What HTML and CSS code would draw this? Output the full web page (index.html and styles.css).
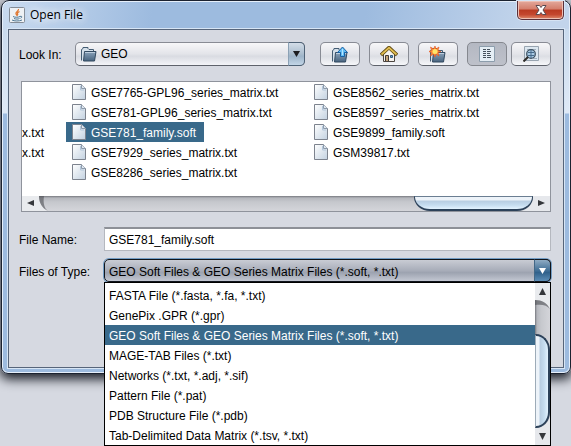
FILE: index.html
```html
<!DOCTYPE html>
<html lang="en">
<head>
<meta charset="utf-8">
<title>Open File</title>
<link rel="stylesheet" href="styles.css">
</head>
<body>
<svg class="defs" aria-hidden="true">
  <defs>
    <linearGradient id="folder" x2="0" y2="1"><stop stop-color="#8ba3bb"/><stop offset="1" stop-color="#48647f"/></linearGradient>
    <linearGradient id="page" x2="1" y2="1"><stop stop-color="#fff"/><stop offset="1" stop-color="#c3d2e1"/></linearGradient>
  </defs>
  <symbol id="doc" viewBox="0 0 14 16">
    <path d="M.5.5h9l4 4v11H.5z" fill="url(#page)" stroke="#7d838e"/>
    <path d="M9.5.5v4h4" fill="#dfe8f1" stroke="#8d9bab"/><path d="M8.500 2v4H12" fill="none" stroke="#b4c7db"/>
  </symbol>
  <symbol id="dir" viewBox="0 0 17 16">
    <path d="M1.500 14.500V3.500L3 2.500V1.500h5v1l1 1h4.500v3" fill="#d5e0ea" stroke="#445c73"/>
    <path d="M4.500 5.500h11.500l-1.500 9.500H3.500z" fill="url(#folder)" stroke="#334a61"/>
    <path d="M5 6.500h10" stroke="#bccddd"/>
  </symbol>
</svg>
<main class="window">
  <header class="titlebar">
    <svg class="java" width="16" height="16" viewBox="0 0 16 16" aria-hidden="true">
      <rect x=".5" y=".5" width="15" height="15" rx="1" fill="#eef1f4" stroke="#848c96"/>
      <path d="M9.500 2C10 4 6 5 7 7l1.500 2M10.500 4.500C8 6 8 6.500 9 8" fill="none" stroke="#e07832" stroke-width="1.300"/>
      <path d="M4 9.500c2 1 5 1 7 0M11 9.500c2-1 2.500 1 .5 1.800M5 11.500c2 .8 4 .8 5.500 0M3 13c2 1.300 7.500 1.300 10 0" fill="none" stroke="#4e7896"/>
    </svg>
    <h1>Open File</h1>
    <button class="close" aria-label="Close">
      <svg width="12" height="10" viewBox="0 0 12 10"><path d="M1 .5h3.500L6 2.500 7.500.5H11L8 5l3 4.500H7.500L6 7.500l-1.500 2H1L4 5z" fill="#fff" stroke="#5b4a50"/></svg>
    </button>
  </header>
  <form class="content">
    <div class="toolbar">
      <label for="lookin">Look In:</label>
      <div class="combo">
        <svg class="combo-icon" width="17" height="16" aria-hidden="true"><use href="#dir"/></svg>
        <select id="lookin" class="lookin"><option>GEO</option></select>
        <span class="arrow"><svg width="7" height="6" viewBox="0 0 7 6"><path d="M0 0h7L3.500 6z" fill="#1c1d20"/></svg></span>
      </div>
      <div class="tools">
        <button type="button" class="tool" aria-label="Up one level">
          <svg width="18" height="17" viewBox="0 0 18 17"><use href="#dir" width="17" height="16" y="1"/><path d="M11.500 1l5 5.500h-3v4h-4v-4h-3z" fill="#62bdf5" stroke="#1961a2"/><path d="M11.500 3v6" stroke="#b5e5ff"/></svg>
        </button>
        <button type="button" class="tool" aria-label="Home">
          <svg width="18" height="17" viewBox="0 0 18 17"><path d="M3.500 8L9 3l5.500 5v7.500h-11z" fill="#f5f3ef" stroke="#4c4540"/><path d="M1 9l8-7.500L17 9" fill="none" stroke="#5e4812" stroke-width="3.500"/><path d="M1.500 8.500L9 1.800l7.500 6.700" fill="none" stroke="#e0bd50" stroke-width="1.800"/><path d="M5.500 15V9.500h3V15" fill="#c6a57b" stroke="#443b33"/><path d="M10.500 9.500h2v2h-2z" fill="#65a3d0" stroke="#31597d"/></svg>
        </button>
        <button type="button" class="tool" aria-label="New folder">
          <svg width="18" height="17" viewBox="0 0 18 17"><use href="#dir" width="17" height="16" y="1"/><path d="M6 0l1 3 3-2-1 3.500 3 1-3 1 1 3.500-3-2-1 3-1.500-3-3 2 1-3.500-3-1 3-1-1-3.500 3 2z" fill="#ff8b31" stroke="#e35424" stroke-width=".6"/><circle cx="6" cy="5.500" r="2.500" fill="#ffe66b"/></svg>
        </button>
        <button type="button" class="tool pressed" aria-label="List view" aria-pressed="true">
          <svg width="16" height="16" viewBox="0 0 16 16"><path d="M.5.500h15v15H.5z" fill="#e5eef5" stroke="#8c9dac"/><path d="M4 3.500h3M4 5.500h3M4 7.500h3M4 9.500h3M4 11.500h3M8 3.500h3M8 5.500h4M8 7.500h3M8 9.500h4M8 11.500h4" stroke="#46515d"/></svg>
        </button>
        <button type="button" class="tool details" aria-label="Details view">
          <svg width="16" height="16" viewBox="0 0 16 16"><path d="M1.500.5h14v14h-14z" fill="#dce7f0" stroke="#98a4b0"/><path d="M4 3.500h3M9 3.500h4M10 12.500h4" stroke="#a1b0be"/><circle cx="8" cy="8" r="4.300" fill="#a8cae4" stroke="#3f5263" stroke-width="1.300"/><path d="M5 6.500h6M5 9.500h6M8 4v8" stroke="#466b8b"/><path d="M5 11l-4.500 4.500" stroke="#302e2b" stroke-width="2"/></svg>
        </button>
      </div>
    </div>

    <section class="browser" aria-label="Files">
      <div class="files">
        <ul class="tail">
          <li>x.txt</li>
          <li>x.txt</li>
        </ul>
        <ul>
          <li><svg class="doc"><use href="#doc"/></svg><span>GSE7765-GPL96_series_matrix.txt</span></li>
          <li><svg class="doc"><use href="#doc"/></svg><span>GSE781-GPL96_series_matrix.txt</span></li>
          <li class="selected"><svg class="doc"><use href="#doc"/></svg><span>GSE781_family.soft</span></li>
          <li><svg class="doc"><use href="#doc"/></svg><span>GSE7929_series_matrix.txt</span></li>
          <li><svg class="doc"><use href="#doc"/></svg><span>GSE8286_series_matrix.txt</span></li>
        </ul>
        <ul>
          <li><svg class="doc"><use href="#doc"/></svg><span>GSE8562_series_matrix.txt</span></li>
          <li><svg class="doc"><use href="#doc"/></svg><span>GSE8597_series_matrix.txt</span></li>
          <li><svg class="doc"><use href="#doc"/></svg><span>GSE9899_family.soft</span></li>
          <li><svg class="doc"><use href="#doc"/></svg><span>GSM39817.txt</span></li>
        </ul>
      </div>
      <div class="hscroll" aria-hidden="true">
        <svg width="26" height="15" viewBox="0 0 26 15"><path d="M0 0h17c0 7 3 12 9 15H0z" fill="#e9ebee"/><path d="M17 0c0 7 3 12 9 15-4-3-5-8-4-15z" fill="#4c4e54" opacity=".6"/><path d="M12 4v6L5 7z" fill="#35373b"/></svg>
        <span class="hthumb"></span>
        <svg class="edge" width="17" height="15" viewBox="0 0 17 15"><path d="M0 0h17v15H-12C-5 14 0 8 0 0z" fill="#e6e8ec"/><path d="M5 4v6l7-3z" fill="#35373b"/></svg>
      </div>
    </section>

    <div class="field">
      <label for="name">File Name:</label>
      <input id="name" type="text" value="GSE781_family.soft">
    </div>
    <div class="field type">
      <label for="type">Files of Type:</label>
      <div class="combo active">
        <select id="type"><option>GEO Soft Files &amp; GEO Series Matrix Files (*.soft, *.txt)</option></select>
        <span class="arrow"><svg width="7" height="6" viewBox="0 0 7 6"><path d="M0 0h7L3.500 6z" fill="#fff"/></svg></span>
        <div class="popup">
          <ul class="options" role="listbox" aria-label="Files of Type">
            <li role="option">FASTA File (*.fasta, *.fa, *.txt)</li>
            <li role="option">GenePix .GPR (*.gpr)</li>
            <li role="option" class="current" aria-selected="true">GEO Soft Files &amp; GEO Series Matrix Files (*.soft, *.txt)</li>
            <li role="option">MAGE-TAB Files (*.txt)</li>
            <li role="option">Networks (*.txt, *.adj, *.sif)</li>
            <li role="option">Pattern File (*.pat)</li>
            <li role="option">PDB Structure File (*.pdb)</li>
            <li role="option">Tab-Delimited Data Matrix (*.tsv, *.txt)</li>
          </ul>
          <div class="vscroll" aria-hidden="true">
            <svg width="15" height="26" viewBox="0 0 15 26"><path d="M0 0h15v26C12 20 7 17 0 17z" fill="#e9ebee"/><path d="M0 17c7 0 12 3 15 9-3-4-8-5-15-4z" fill="#4c4e54" opacity=".6"/><path d="M4 12h7L7.500 5z" fill="#35373b"/></svg>
            <span class="vthumb"></span>
            <svg class="edge" width="15" height="17" viewBox="0 0 15 17"><path d="M0 0C8 0 14-5 15-12v29H0z" fill="#e6e8ec"/><path d="M4 5h7l-3.500 7z" fill="#35373b"/></svg>
          </div>
        </div>
      </div>
    </div>
  </form>
</main>
</body>
</html>
```

FILE: styles.css
```css
* { box-sizing: border-box; }

body {
  margin: 0;
  min-height: 100vh;
  background: #d6d9e1;
  color: #000;
  font: 12px/20px "Liberation Sans", Arial, sans-serif;
}

ul { margin: 0; padding: 0; list-style: none; }
svg { display: block; flex: none; }
.defs { position: absolute; width: 0; height: 0; }

button, input, select { font: inherit; color: inherit; }

.window {
  margin-left: 1px;
  padding: 0 6px 5px;
  border: 1px solid #1b2230;
  border-radius: 8px 8px 7px 7px;
  background: linear-gradient(100deg, #c9dbf0 0, #b5cce8 70px, #9dbbdf 150px, #9dbbdf 360px, #c2d4eb 520px) top / 100% 28px no-repeat,
    linear-gradient(#c2d5ea 0, #dfe9f6 112px, #9dbbdf 113px);
  box-shadow: inset 0 0 0 1px #e6effa, 0 4px 12px 1px #161a23;
}

.titlebar { display: flex; align-items: center; gap: 5px; height: 28px; padding-left: 1px; }

.titlebar h1 {
  flex: 1;
  margin: 0;
  font: 12px/22px "Open Sans", "Noto Sans", sans-serif;
  text-shadow: 0 0 8px #fff, 0 0 8px #fff;
}

.close {
  display: grid;
  place-items: center;
  align-self: flex-start;
  width: 47px;
  height: 19px;
  padding: 0;
  border: 1px solid #59303a;
  border-top: 0;
  border-radius: 0 0 5px 5px;
  background: linear-gradient(#e3a99c, #d47d6b 45%, #b93a22 50%, #c4472f 75%, #dd8a6c);
  box-shadow: inset 0 0 0 1px #edc0b5, 0 0 0 1px #d6e3f3;
}

.content {
  padding: 12px 12px 85px 10px;
  border: 1px solid #57657a;
  background: #d6d9e1;
  box-shadow: 0 0 0 1px #d7e5f5;
}

.toolbar { display: flex; height: 24px; }
.toolbar label { width: 56px; line-height: 26px; }
.tools { display: flex; gap: 9px; margin-left: 15px; }

.tool {
  display: grid;
  place-items: center;
  width: 40px;
  height: 24px;
  padding: 0;
  border: 1px solid #888b94;
  border-bottom-color: #5e626b;
  border-radius: 5px;
  background: linear-gradient(#f7f7f9, #e3e4e9 50%, #dcdee4 60%, #f6f7fa);
}

.tool.pressed { border-color: #85888f; background: linear-gradient(#b4b8c2, #bec1ca); }
.tool.details { margin-left: -5px; }

.combo { position: relative; display: flex; flex: 1; min-width: 0; height: 24px; }

.combo select {
  width: 100%;
  height: 24px;
  margin: 0;
  padding: 2px 20px 0 5px;
  appearance: none;
  border: 1px solid #888b94;
  border-bottom-color: #5e626b;
  border-radius: 5px;
  outline: 0;
  background: linear-gradient(#f7f7f9, #e3e4e9 50%, #d9dbe2 60%, #f3f4f8);
}

.combo .lookin { padding: 0 20px 0 25px; }
.combo-icon { position: absolute; left: 5px; top: 4px; }

.arrow {
  position: absolute;
  top: 0;
  right: 0;
  display: grid;
  place-items: center;
  width: 17px;
  height: 24px;
  border: 1px solid #4e6276;
  border-left-color: #8ba1b5;
  border-radius: 0 5px 5px 0;
  background: linear-gradient(#d3dde8, #aabdce 50%, #9db4c9 60%, #c3d6e7);
  pointer-events: none;
}

.browser {
  margin: 15px 0 15px 2px;
  border: 1px solid #8f939c;
  background: #fff;
}

.files {
  display: grid;
  grid-template-columns: 44px 242px 1fr;
  height: 114px;
  white-space: nowrap;
}

.files ul { display: grid; grid-template-rows: repeat(5, 20px); }
.files li { display: flex; justify-self: start; gap: 5px; padding: 0 8px 0 6px; line-height: 22px; }
.files .tail li { padding: 0; }
.files .tail li:first-child { grid-row-start: 3; }
.files .tail li:last-child { grid-row-start: 4; }
.files .selected { background: #39698a; color: #fff; }
.doc { width: 14px; height: 16px; margin-top: 2px; }

.hscroll {
  display: flex;
  height: 15px;
  background: linear-gradient(#77797f, #b5b7bd 2px, #c6c8cd 6px, #d4d5da);
}

.edge { overflow: visible; }

.hthumb {
  width: 119px;
  margin-left: auto;
  border: 1px solid #2c4159;
  border-top-color: #6b7e92;
  border-bottom-width: 2px;
  border-radius: 0 0 16px 16px / 0 0 14px 14px;
  background: linear-gradient(#edf3f9 0 3px, #b8cde1 4px, #c5dcef 8px, #e3f3ff);
  z-index: 1;
}

.field { display: flex; height: 24px; margin-bottom: 8px; }
.field label { width: 85px; line-height: 26px; }

.field input {
  flex: 1;
  min-width: 0;
  padding: 0 4px;
  border: 1px solid #b5b8bf;
  border-top: 2px solid #8d9097;
  outline: 0;
  background: #fff;
}

.field.type { height: 23px; margin: 0; }
.active { height: 23px; }

.active select {
  height: 23px;
  padding-left: 4px;
  border-color: #10151c;
  background: linear-gradient(#c9ccd4, #a8adb9 50%, #9da3b0 60%, #c3c7d2);
  box-shadow: 0 0 0 1px #739dc5;
}

.active .arrow {
  height: 23px;
  border-color: #10151c;
  border-left-color: #436887;
  background: linear-gradient(#8fabc3, #416f96 50%, #30618b 60%, #5c8db6);
}

.popup {
  position: absolute;
  top: 100%;
  left: 0;
  right: 0;
  z-index: 2;
  display: flex;
  border: 1px solid #000;
  background: #fff;
}

.options { flex: 1; padding-top: 2px; }
.options li { padding-left: 4px; line-height: 22px; height: 20px; }
.options .current { background: #39698a; color: #fff; }

.vscroll {
  display: flex;
  flex-direction: column;
  width: 15px;
  background: linear-gradient(90deg, #77797f, #b5b7bd 2px, #c6c8cd 6px, #d4d5da);
}

.vthumb {
  height: 94px;
  margin-top: auto;
  border: 2px solid #2c4159;
  border-left: 1px solid #9dabb8;
  border-radius: 0 14px 14px 0 / 0 16px 16px 0;
  background: linear-gradient(90deg, #edf3f9 0 3px, #b8cde1 4px, #c5dcef 8px, #e3f3ff);
  z-index: 1;
}
```
